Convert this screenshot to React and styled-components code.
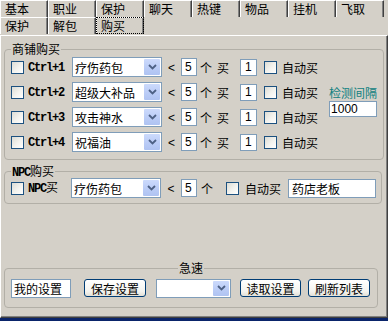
import React from 'react';
import styled, { createGlobalStyle, css } from 'styled-components';

const GlobalStyle = createGlobalStyle`
  html, body { margin: 0; padding: 0; background: #D4D0C8; }
  * { box-sizing: border-box; }
`;

const Window = styled.div`
  width: 388px;
  height: 321px;
  background: #D4D0C8;
  display: flex;
  flex-direction: column;
  overflow: hidden;
  color: #000;
  font-family: "Noto Sans CJK SC", sans-serif;
  font-size: 12px;
  line-height: 13px;
`;

const TabStrip = styled.div`
  display: flex;
  flex-direction: column;
  height: 35px;
  flex: none;
`;

const TabRow = styled.div`
  display: flex;
  height: ${p => p.$h}px;
`;

const Tab = styled.div`
  position: relative;
  flex: none;
  width: 48px;
  height: 17px;
  border-left: 1px solid #fff;
  border-top: 1px solid #fff;
  border-right: 1px solid #404040;
  box-shadow: inset -1px 0 #808080;
  padding-left: 4px;
  line-height: 15px;
  white-space: nowrap;
  ${p => p.$focused && css`
    outline: 1px dotted #000;
    outline-offset: -1px;
  `}
`;

const Panel = styled.div`
  flex: 1;
  display: flex;
  flex-direction: column;
  border-top: 1px solid #fff;
  border-left: 1px solid #fff;
  border-right: 1px solid #404040;
  border-bottom: 1px solid #404040;
  box-shadow: inset -1px -1px #808080;
  padding-left: 3px;
`;

const BottomStrip = styled.div`
  height: 3px;
  flex: none;
  background: #0A246A;
`;

const GroupBox = styled.div`
  position: relative;
  flex: none;
  width: ${p => p.$w}px;
  height: ${p => p.$h}px;
  margin-top: ${p => p.$mt}px;
  padding: ${p => p.$pad};
  border: 1px solid #B2AFA7;
  border-radius: 4px;
  display: flex;
`;

const Legend = styled.span`
  position: absolute;
  top: -8px;
  height: 13px;
  background: #D4D0C8;
  padding: 0 1px;
  line-height: 13px;
  white-space: nowrap;
  ${p => p.$center
    ? css`left: 50%; transform: translateX(-50%);`
    : css`left: 6px;`}
`;

const Rows = styled.div`
  display: flex;
  flex-direction: column;
  gap: 5px;
`;

const Row = styled.div`
  display: flex;
  align-items: center;
  height: 20px;
`;

const Check = styled.span`
  flex: none;
  width: 13px;
  height: 13px;
  margin-left: ${p => p.$ml || 0}px;
  border: 1px solid #1C5180;
  background: linear-gradient(135deg, #DCDCD5 0%, #F3F3EF 55%, #FFFFFF 100%);
`;

const Mono = styled.span`
  font-family: "Liberation Mono", monospace;
  font-weight: bold;
  font-size: 12px;
  line-height: 13px;
  letter-spacing: -1.2px;
`;

const Label = styled.span`
  flex: none;
  white-space: nowrap;
  line-height: 13px;
  width: ${p => (p.$w ? `${p.$w}px` : 'auto')};
  margin-left: ${p => p.$ml || 0}px;
  text-align: ${p => p.$align || 'left'};
`;

const Combo = styled.div`
  flex: none;
  display: flex;
  align-items: stretch;
  width: ${p => p.$w}px;
  height: ${p => p.$h || 20}px;
  margin-left: ${p => p.$ml || 0}px;
  padding: 1px;
  border: 1px solid #7F9DB9;
  background: #fff;
`;

const ComboText = styled.span`
  flex: 1;
  padding-left: 1px;
  display: flex;
  align-items: center;
  white-space: nowrap;
  overflow: hidden;
`;

const ComboButton = styled.span`
  flex: none;
  width: 16px;
  display: flex;
  align-items: center;
  justify-content: center;
  border-radius: 1px;
  background: linear-gradient(180deg, #CCDAFC 0%, #B9CBF6 60%, #AFC3F2 100%);
`;

const Field = styled.span`
  flex: none;
  display: flex;
  align-items: center;
  width: ${p => p.$w}px;
  height: ${p => p.$h}px;
  margin-left: ${p => p.$ml || 0}px;
  margin-top: ${p => p.$mt || 0}px;
  padding-left: ${p => p.$pl || 2}px;
  border: 1px solid #7F9DB9;
  background: #fff;
  white-space: nowrap;
  overflow: hidden;
`;

const Digits = styled.span`
  font-family: "Liberation Sans", sans-serif;
  font-size: 12px;
`;

const Side = styled.div`
  display: flex;
  flex-direction: column;
  width: 48px;
  margin-left: 11px;
  padding-top: 29px;
`;

const Teal = styled.span`
  color: #0F8080;
  line-height: 14px;
  white-space: nowrap;
`;

const Button = styled.span`
  flex: none;
  display: flex;
  align-items: center;
  justify-content: center;
  width: ${p => p.$w}px;
  height: 18px;
  margin-left: ${p => p.$ml || 0}px;
  border: 1px solid #003C74;
  border-radius: 3px;
  background: linear-gradient(180deg, #FFFFFF 0%, #F4F4F0 70%, #E3E0D7 100%);
  white-space: nowrap;
`;

const Chevron = () => (
  <svg width="9" height="6" viewBox="0 0 9 6">
    <path d="M1 1 L4.5 4.5 L8 1" fill="none" stroke="#4D6185" strokeWidth="1.8" />
  </svg>
);

const ComboBox = ({ w, ml, h, children }) => (
  <Combo $w={w} $ml={ml} $h={h}>
    <ComboText>{children}</ComboText>
    <ComboButton><Chevron /></ComboButton>
  </Combo>
);

const shopRows = [
  { key: 'Ctrl+1', item: '疗伤药包' },
  { key: 'Ctrl+2', item: '超级大补品' },
  { key: 'Ctrl+3', item: '攻击神水' },
  { key: 'Ctrl+4', item: '祝福油' },
];

const topTabs = ['基本', '职业', '保护', '聊天', '热键', '物品', '挂机', '飞取'];
const subTabs = ['保护', '解包', '购买'];

export default function App() {
  return (
    <Window>
      <GlobalStyle />
      <TabStrip>
        <TabRow $h={17}>
          {topTabs.map(t => <Tab key={t}>{t}</Tab>)}
        </TabRow>
        <TabRow $h={18}>
          {subTabs.map((t, i) => (
            <Tab key={t} $focused={i === 2}>{t}</Tab>
          ))}
        </TabRow>
      </TabStrip>
      <Panel>
        <GroupBox $w={380} $h={111} $mt={13} $pad="7px 0 0 6px">
          <Legend>商铺购买</Legend>
          <Rows>
            {shopRows.map(r => (
              <Row key={r.key}>
                <Check />
                <Label $w={44} $ml={4}><Mono>{r.key}</Mono></Label>
                <ComboBox w={90}>{r.item}</ComboBox>
                <Label $w={19} $align="center"><Digits>&lt;</Digits></Label>
                <Field $w={16} $h={18} $pl={3}><Digits>5</Digits></Field>
                <Label $ml={3}>个</Label>
                <Label $ml={5}>买</Label>
                <Field $w={17} $h={17} $ml={11} $pl={4}><Digits>1</Digits></Field>
                <Check $ml={7} />
                <Label $ml={5}>自动买</Label>
              </Row>
            ))}
          </Rows>
          <Side>
            <Teal>检测间隔</Teal>
            <Field $w={48} $h={16} $mt={1} $pl={1}><Digits>1000</Digits></Field>
          </Side>
        </GroupBox>

        <GroupBox $w={378} $h={33} $mt={11} $pad="6px 0 0 6px">
          <Legend><Mono>NPC</Mono>购买</Legend>
          <Row>
            <Check />
            <Label $ml={4}><Mono>NPC</Mono>买</Label>
            <ComboBox w={90} ml={13}>疗伤药包</ComboBox>
            <Label $w={20} $align="center"><Digits>&lt;</Digits></Label>
            <Field $w={16} $h={18} $pl={3}><Digits>5</Digits></Field>
            <Label $ml={4}>个</Label>
            <Check $ml={13} />
            <Label $ml={6}>自动买</Label>
            <Field $w={88} $h={19} $ml={7} $pl={3}>药店老板</Field>
          </Row>
        </GroupBox>

        <GroupBox $w={374} $h={40} $mt={64} $pad="9px 0 0 6px">
          <Legend $center>急速</Legend>
          <Row>
            <Field $w={60} $h={19}>我的设置</Field>
            <Button $w={62} $ml={13}>保存设置</Button>
            <ComboBox w={75} h={19} ml={10}></ComboBox>
            <Button $w={61} $ml={9}>读取设置</Button>
            <Button $w={62} $ml={7}>刷新列表</Button>
          </Row>
        </GroupBox>
      </Panel>
      <BottomStrip />
    </Window>
  );
}
